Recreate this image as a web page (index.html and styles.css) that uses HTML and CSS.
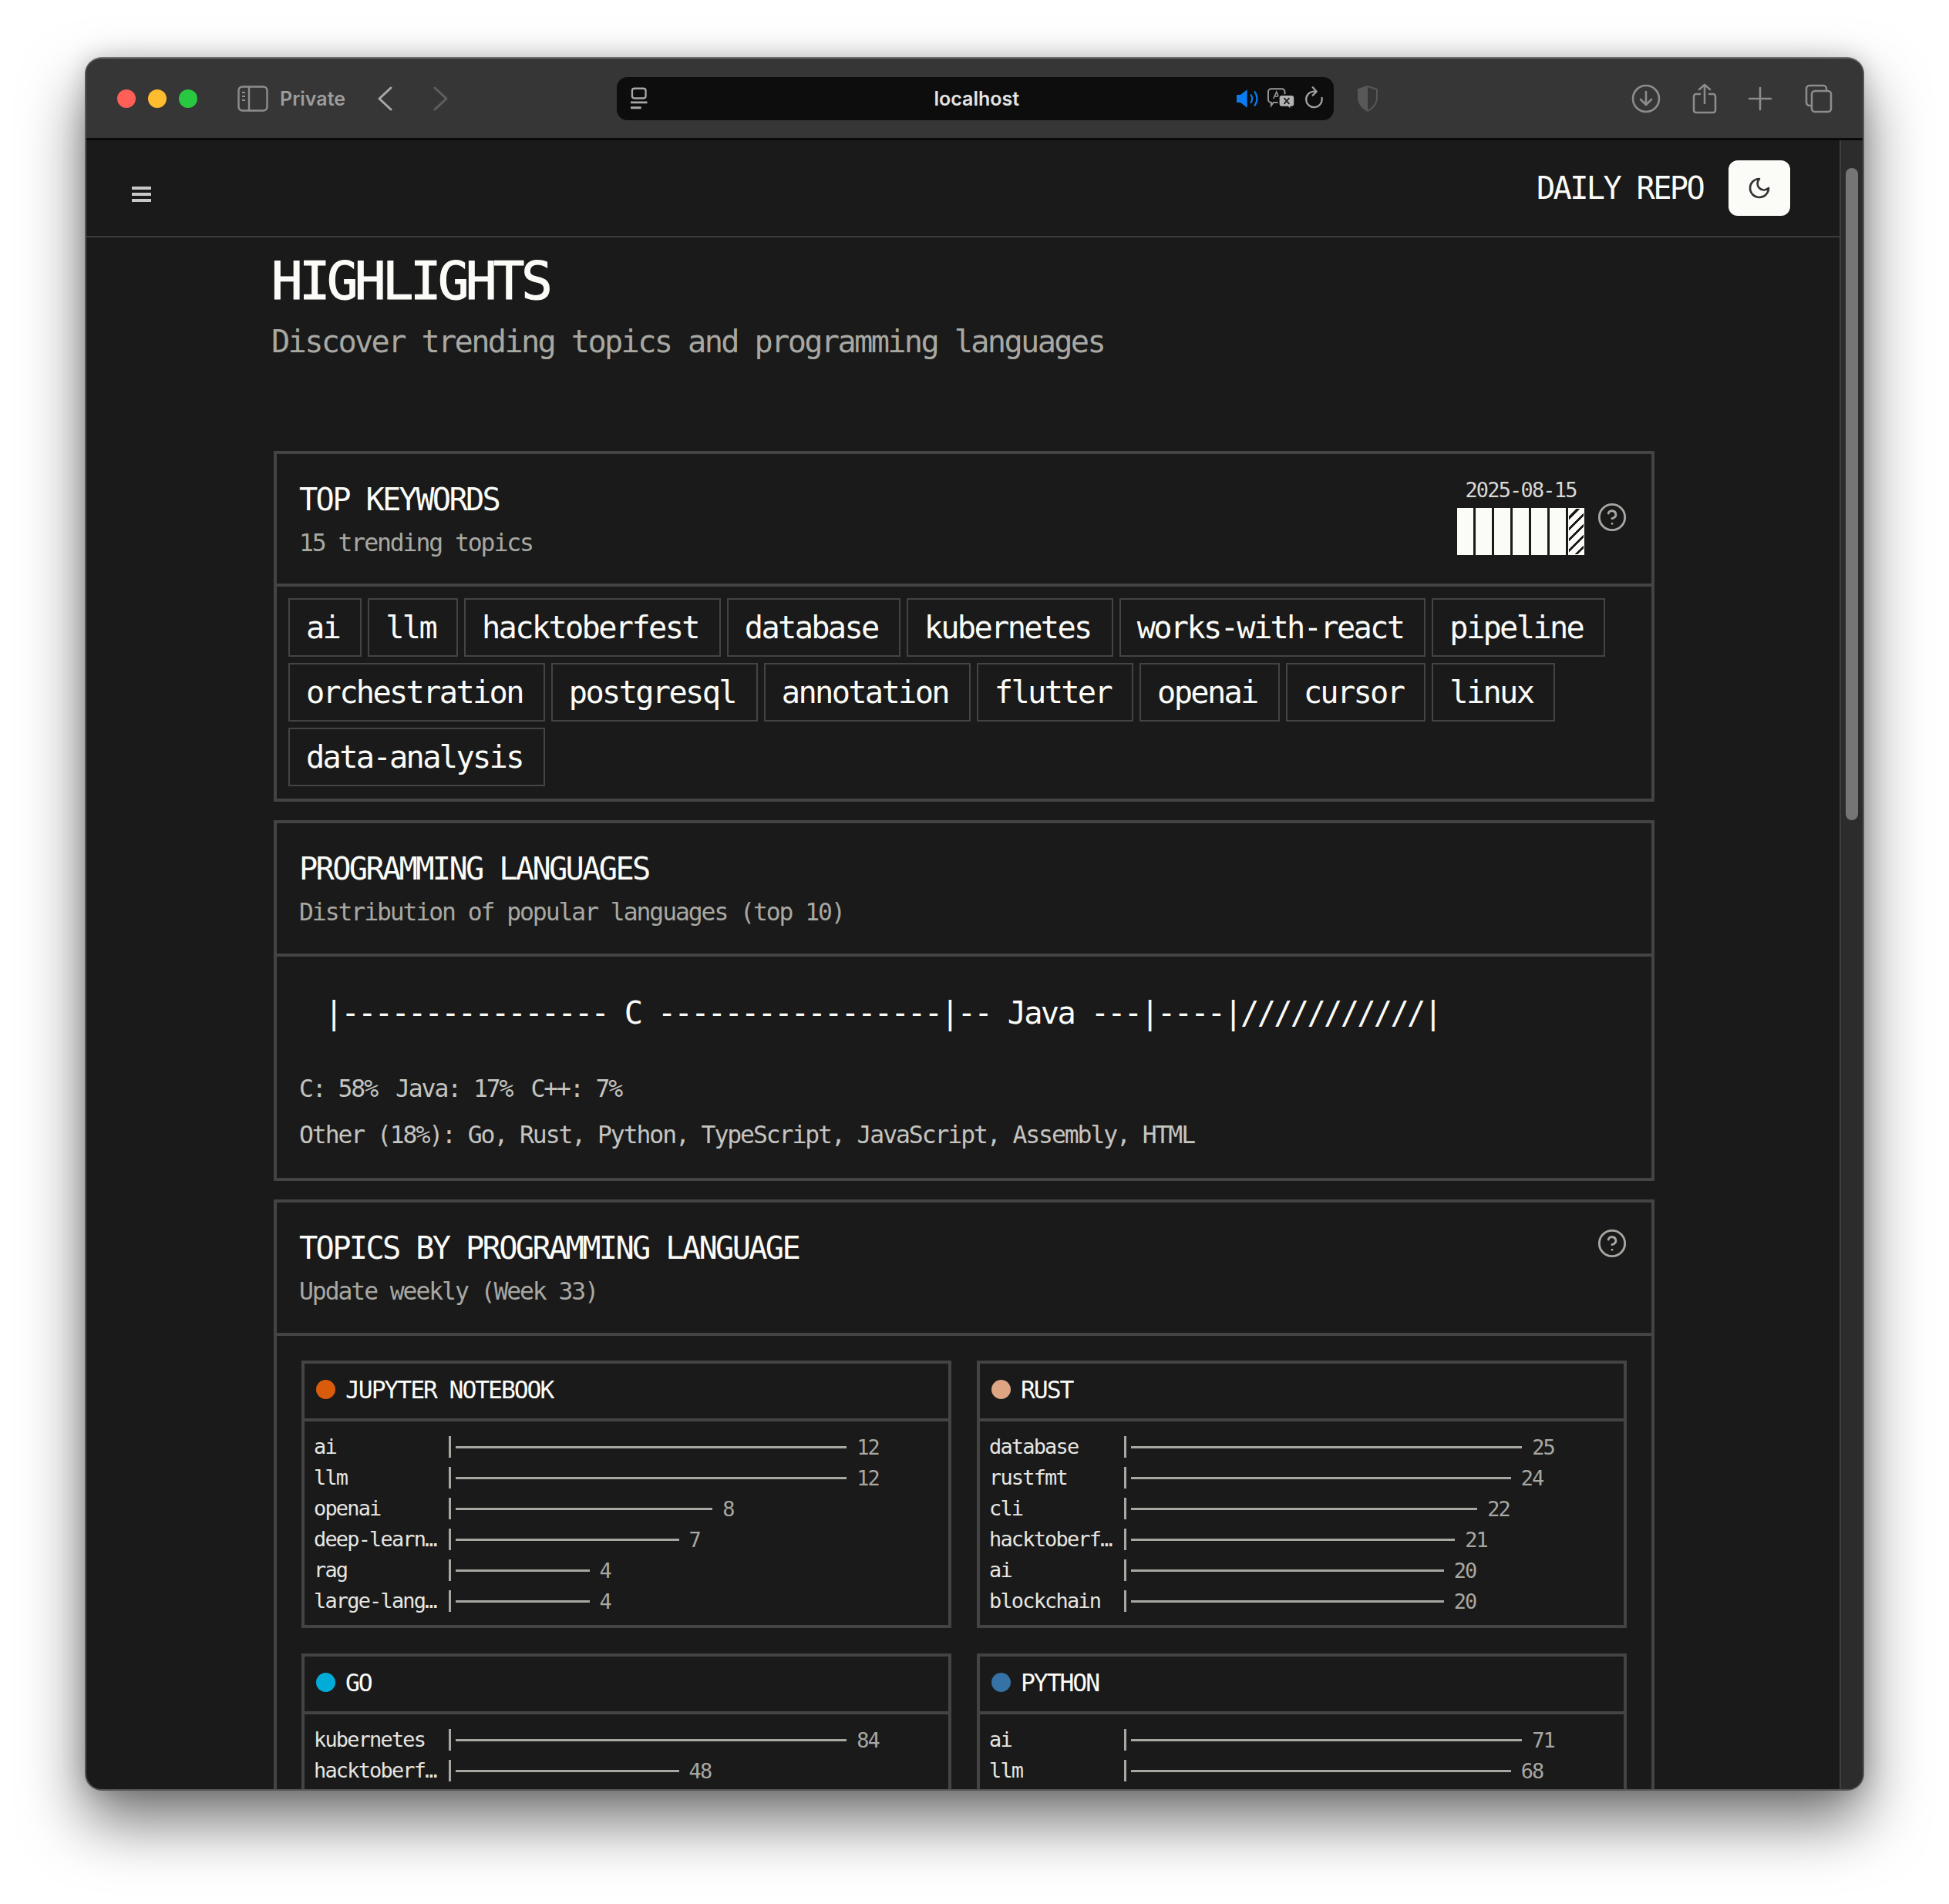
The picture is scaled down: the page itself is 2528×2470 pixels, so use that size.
FILE: index.html
```html
<!DOCTYPE html>
<html lang="en">
<head>
    <meta charset="UTF-8">
    <meta name="viewport" content="width=device-width, initial-scale=1.0">
    <title>Daily Repo - Highlights</title>
    <link rel="stylesheet" href="styles.css">
</head>
<body>
    <div class="window">
        <div class="toolbar">
            <div class="lights">
                <span class="light red"></span>
                <span class="light yellow"></span>
                <span class="light green"></span>
            </div>
            <svg class="tb-sidebar" width="40" height="34" viewBox="0 0 40 34" fill="none" stroke="#8e8e8e" stroke-width="2.4">
                <rect x="1.5" y="1.5" width="37" height="31" rx="5"/>
                <path d="M15 2v30"/>
                <path d="M6 9h4M6 14h4M6 19h4" stroke-width="2"/>
            </svg>
            <span class="tb-private">Private</span>
            <svg class="tb-back" width="22" height="32" viewBox="0 0 22 32" fill="none" stroke="#a8a8a8" stroke-width="3" stroke-linecap="round" stroke-linejoin="round">
                <path d="M19 2 4 16l15 14"/>
            </svg>
            <svg class="tb-forward" width="22" height="32" viewBox="0 0 22 32" fill="none" stroke="#5e5e5e" stroke-width="3" stroke-linecap="round" stroke-linejoin="round">
                <path d="M3 2l15 14L3 30"/>
            </svg>
            <div class="urlbar">
                <svg class="url-page" width="22" height="30" viewBox="0 0 22 30" fill="none" stroke="#a6a6a6" stroke-width="2.4">
                    <rect x="2" y="1.5" width="18" height="13" rx="3"/>
                    <path d="M0 20h22M0 27h14" stroke-width="3"/>
                </svg>
                <span class="url-text">localhost</span>
                <svg class="url-sound" width="30" height="26" viewBox="0 0 30 26">
                    <path d="M1 8h5l9-7v24l-9-7H1z" fill="#0a7cf0"/>
                    <path d="M20 8c2 3 2 7 0 10M25 4c4 5 4 13 0 18" fill="none" stroke="#0a7cf0" stroke-width="2.2" stroke-linecap="round"/>
                </svg>
                <svg class="url-translate" width="38" height="30" viewBox="0 0 38 30" fill="none" stroke="#9a9a9a" stroke-width="2">
                    <path d="M6 2h14a4 4 0 0 1 4 4v10a4 4 0 0 1-4 4H9l-3 4v-4a4 4 0 0 1-4-4V6a4 4 0 0 1 4-4z"/>
                    <path d="M9 15 13 6l4 9M10.500 12h5" stroke-width="1.600"/>
                    <path d="M20 10h13a4 4 0 0 1 4 4v8a4 4 0 0 1-4 4h-1v4l-4-4h-8a4 4 0 0 1-4-4v-8a4 4 0 0 1 4-4z" fill="#b4b4b4" stroke="#0d0d0d"/>
                    <path d="M23 14l7 8M30 14l-7 8" stroke="#222" stroke-width="2"/>
                </svg>
                <svg class="url-reload" width="26" height="32" viewBox="0 0 26 32" fill="none" stroke="#a0a0a0" stroke-width="2.400" stroke-linecap="round" stroke-linejoin="round">
                    <path d="M22 15a10.500 10.500 0 1 1-9-8.500"/>
                    <path d="M10 1l5 5.500-5 5"/>
                </svg>
            </div>
            <svg class="tb-shield" width="28" height="34" viewBox="0 0 28 34">
                <path d="M14 1 2 5v11c0 8 5 13 12 17 7-4 12-9 12-17V5z" fill="none" stroke="#585858" stroke-width="2"/>
                <path d="M14 1 2 5v11c0 8 5 13 12 17z" fill="#585858"/>
            </svg>
            <div class="tb-right">
                <svg class="tb-download" width="38" height="38" viewBox="0 0 38 38" fill="none" stroke="#8c8c8c" stroke-width="2.600" stroke-linecap="round" stroke-linejoin="round">
                    <circle cx="19" cy="19" r="17"/>
                    <path d="M19 10v17M12 20l7 7 7-7"/>
                </svg>
                <svg class="tb-share" width="32" height="40" viewBox="0 0 32 40" fill="none" stroke="#8c8c8c" stroke-width="2.600" stroke-linecap="round" stroke-linejoin="round">
                    <path d="M10 14H5a3 3 0 0 0-3 3v18a3 3 0 0 0 3 3h22a3 3 0 0 0 3-3V17a3 3 0 0 0-3-3h-5"/>
                    <path d="M16 26V2M9 8l7-6 7 6"/>
                </svg>
                <svg width="32" height="32" viewBox="0 0 32 32" fill="none" stroke="#8c8c8c" stroke-width="2.600" stroke-linecap="round">
                    <path d="M16 2v28M2 16h28"/>
                </svg>
                <svg width="36" height="38" viewBox="0 0 36 38" fill="none" stroke="#8c8c8c" stroke-width="2.600">
                    <path d="M8 28H6a4 4 0 0 1-4-4V6a4 4 0 0 1 4-4h18a4 4 0 0 1 4 4v3"/>
                    <rect x="9" y="9" width="25" height="27" rx="4"/>
                </svg>
            </div>
        </div>

        <div class="viewport">
            <div class="page">
                <nav class="nav">
                    <div class="hamburger"><span></span><span></span><span></span></div>
                    <div class="nav-right">
                        <span class="brand">DAILY REPO</span>
                        <button class="theme-btn">
                            <svg width="32" height="32" viewBox="0 0 24 24" fill="none" stroke="#333" stroke-width="2" stroke-linecap="round" stroke-linejoin="round">
                                <path d="M12 3a6 6 0 0 0 9 9 9 9 0 1 1-9-9Z"/>
                            </svg>
                        </button>
                    </div>
                </nav>

                <main class="content">
                    <h1>HIGHLIGHTS</h1>
                    <p class="lead">Discover trending topics and programming languages</p>

                    <section class="card first">
                        <div class="card-head">
                            <div>
                                <h2>TOP KEYWORDS</h2>
                                <p class="sub">15 trending topics</p>
                            </div>
                            <div class="head-right">
                                <div class="date-box">
                                    <span class="date">2025-08-15</span>
                                    <div class="days">
                                        <span></span><span></span><span></span><span></span><span></span><span></span><span class="today"></span>
                                    </div>
                                </div>
                                <svg class="help" width="40" height="40" viewBox="0 0 24 24" fill="none" stroke="#a8a8a3" stroke-width="1.700" stroke-linecap="round" stroke-linejoin="round">
                                    <circle cx="12" cy="12" r="10"/>
                                    <path d="M9.090 9a3 3 0 0 1 5.830 1c0 2-3 3-3 3"/>
                                    <path d="M12 17h.01"/>
                                </svg>
                            </div>
                        </div>
                        <div class="tags">
                            <span class="tag">ai</span>
                            <span class="tag">llm</span>
                            <span class="tag">hacktoberfest</span>
                            <span class="tag">database</span>
                            <span class="tag">kubernetes</span>
                            <span class="tag">works-with-react</span>
                            <span class="tag">pipeline</span>
                            <span class="tag">orchestration</span>
                            <span class="tag">postgresql</span>
                            <span class="tag">annotation</span>
                            <span class="tag">flutter</span>
                            <span class="tag">openai</span>
                            <span class="tag">cursor</span>
                            <span class="tag">linux</span>
                            <span class="tag">data-analysis</span>
                        </div>
                    </section>

                    <section class="card">
                        <div class="card-head">
                            <div>
                                <h2>PROGRAMMING LANGUAGES</h2>
                                <p class="sub">Distribution of popular languages (top 10)</p>
                            </div>
                        </div>
                        <div class="lang-body">
                            <pre class="lang-chart">|---------------- C -----------------|-- Java ---|----|///////////|</pre>
                            <div class="lang-stats">
                                <span>C: 58%</span>
                                <span>Java: 17%</span>
                                <span>C++: 7%</span>
                            </div>
                            <p class="lang-other">Other (18%): Go, Rust, Python, TypeScript, JavaScript, Assembly, HTML</p>
                        </div>
                    </section>

                    <section class="card">
                        <div class="card-head">
                            <div>
                                <h2>TOPICS BY PROGRAMMING LANGUAGE</h2>
                                <p class="sub">Update weekly (Week 33)</p>
                            </div>
                            <svg class="help help-top" width="40" height="40" viewBox="0 0 24 24" fill="none" stroke="#a8a8a3" stroke-width="1.700" stroke-linecap="round" stroke-linejoin="round">
                                <circle cx="12" cy="12" r="10"/>
                                <path d="M9.090 9a3 3 0 0 1 5.830 1c0 2-3 3-3 3"/>
                                <path d="M12 17h.01"/>
                            </svg>
                        </div>
                        <div class="lang-grid">
                            <div class="lang-card">
                                <div class="lang-head"><span class="dot jupyter"></span>JUPYTER NOTEBOOK</div>
                                <div class="rows">
                                    <div class="row"><span class="label">ai</span><span class="tick"></span><span class="line" style="width:35ch"></span><span class="val">12</span></div>
                                    <div class="row"><span class="label">llm</span><span class="tick"></span><span class="line" style="width:35ch"></span><span class="val">12</span></div>
                                    <div class="row"><span class="label">openai</span><span class="tick"></span><span class="line" style="width:23ch"></span><span class="val">8</span></div>
                                    <div class="row"><span class="label">deep-learn…</span><span class="tick"></span><span class="line" style="width:20ch"></span><span class="val">7</span></div>
                                    <div class="row"><span class="label">rag</span><span class="tick"></span><span class="line" style="width:12ch"></span><span class="val">4</span></div>
                                    <div class="row"><span class="label">large-lang…</span><span class="tick"></span><span class="line" style="width:12ch"></span><span class="val">4</span></div>
                                </div>
                            </div>
                            <div class="lang-card">
                                <div class="lang-head"><span class="dot rust"></span>RUST</div>
                                <div class="rows">
                                    <div class="row"><span class="label">database</span><span class="tick"></span><span class="line" style="width:35ch"></span><span class="val">25</span></div>
                                    <div class="row"><span class="label">rustfmt</span><span class="tick"></span><span class="line" style="width:34ch"></span><span class="val">24</span></div>
                                    <div class="row"><span class="label">cli</span><span class="tick"></span><span class="line" style="width:31ch"></span><span class="val">22</span></div>
                                    <div class="row"><span class="label">hacktoberf…</span><span class="tick"></span><span class="line" style="width:29ch"></span><span class="val">21</span></div>
                                    <div class="row"><span class="label">ai</span><span class="tick"></span><span class="line" style="width:28ch"></span><span class="val">20</span></div>
                                    <div class="row"><span class="label">blockchain</span><span class="tick"></span><span class="line" style="width:28ch"></span><span class="val">20</span></div>
                                </div>
                            </div>
                            <div class="lang-card">
                                <div class="lang-head"><span class="dot go"></span>GO</div>
                                <div class="rows">
                                    <div class="row"><span class="label">kubernetes</span><span class="tick"></span><span class="line" style="width:35ch"></span><span class="val">84</span></div>
                                    <div class="row"><span class="label">hacktoberf…</span><span class="tick"></span><span class="line" style="width:20ch"></span><span class="val">48</span></div>
                                </div>
                            </div>
                            <div class="lang-card">
                                <div class="lang-head"><span class="dot python"></span>PYTHON</div>
                                <div class="rows">
                                    <div class="row"><span class="label">ai</span><span class="tick"></span><span class="line" style="width:35ch"></span><span class="val">71</span></div>
                                    <div class="row"><span class="label">llm</span><span class="tick"></span><span class="line" style="width:34ch"></span><span class="val">68</span></div>
                                </div>
                            </div>
                        </div>
                    </section>
                </main>
            </div>
            <div class="scrollbar"><div class="thumb"></div></div>
        </div>
    </div>
</body>
</html>
```

FILE: styles.css
```css
* {
    box-sizing: border-box;
    letter-spacing: -0.066em;
}
html, body {
    margin: 0;
    height: 2470px;
    overflow: hidden;
    background: #ffffff;
}
body {
    padding: 74px 110px 0;
    font-family: "DejaVu Sans Mono", "Liberation Mono", monospace;
    color: #fbfcf8;
}

/* browser window */
.window {
    width: 2308px;
    height: 2249px;
    display: flex;
    flex-direction: column;
    overflow: hidden;
    background: #1a1a1a;
    border: 2px solid #555;
    border-top-color: #6e6e6e;
    border-radius: 22px;
    box-shadow: 0 40px 80px rgba(0, 0, 0, 0.55), 0 0 30px rgba(0, 0, 0, 0.18);
}
.toolbar {
    height: 106px;
    flex: none;
    display: flex;
    align-items: center;
    padding: 0 39px 0 40px;
    background: #363636;
    border-bottom: 3px solid #0a0a0a;
    font-family: Inter, "Liberation Sans", sans-serif;
}
.lights {
    display: flex;
    gap: 16px;
}
.light {
    width: 24px;
    height: 24px;
    border-radius: 50%;
}
.red { background: #ff5f57; }
.yellow { background: #febc2e; }
.green { background: #28c840; }
.tb-sidebar {
    margin-left: 52px;
}
.tb-private {
    margin-left: 15px;
    font-size: 25px;
    font-weight: 600;
    color: #9c9c9c;
    letter-spacing: 0;
}
.tb-back {
    margin-left: 40px;
}
.tb-forward {
    margin-left: 51px;
}
.urlbar {
    width: 930px;
    height: 56px;
    margin-left: 217px;
    display: flex;
    align-items: center;
    padding: 0 12px 0 18px;
    background: #0d0d0d;
    border-radius: 14px;
}
.url-text {
    margin-left: 372px;
    font-size: 25px;
    font-weight: 600;
    color: #e4e4e4;
    letter-spacing: 0;
}
.url-sound {
    margin-left: 281px;
}
.url-translate {
    margin-left: 11px;
}
.url-reload {
    margin-left: 12px;
}
.tb-shield {
    margin-left: 30px;
}
.tb-right {
    margin-left: auto;
    display: flex;
    align-items: center;
    gap: 42px;
}
.tb-download {
    margin-right: -1px;
}
.tb-share {
    margin-right: -2px;
}

.viewport {
    flex: 1;
    min-height: 0;
    display: flex;
}
.page {
    width: 2274px;
    flex: none;
}
.scrollbar {
    width: 30px;
    flex: none;
    padding: 36px 0 0 6px;
    background: #2c2c2c;
    border-left: 2px solid #3e3e3e;
}
.thumb {
    width: 16px;
    height: 846px;
    background: #757575;
    border-radius: 8px;
}

/* nav */
.nav {
    height: 126px;
    display: flex;
    align-items: center;
    justify-content: space-between;
    padding: 0 64px 0 59px;
    border-bottom: 2px solid #3c3c3c;
}
.hamburger {
    width: 25px;
    margin-top: 16px;
    display: flex;
    flex-direction: column;
    gap: 4px;
}
.hamburger span {
    height: 4px;
    background: #c8c8c8;
}
.nav-right {
    display: flex;
    align-items: center;
    gap: 33px;
}
.brand {
    font-size: 40.300px;
}
.theme-btn {
    width: 80px;
    height: 72px;
    display: flex;
    align-items: center;
    justify-content: center;
    background: #fbfcf8;
    border: none;
    border-radius: 12px;
}

/* content */
.content {
    padding: 0 240px 0 243px;
}
h1 {
    margin: 17px 0 0 -3px;
    font-size: 67.200px;
    font-weight: 400;
    line-height: 80px;
    -webkit-text-stroke: 1.200px #fbfcf8;
}
.lead {
    margin: 15px 0 0 -3px;
    font-size: 40.300px;
    line-height: 48px;
    color: #a8a8a3;
}
.card {
    margin-top: 24px;
    border: 4px solid #444;
}
.card.first {
    margin-top: 117px;
}
.card-head {
    display: flex;
    justify-content: space-between;
    align-items: center;
    padding: 36px 31px 34px 29px;
    border-bottom: 4px solid #444;
}
.card.first .card-head {
    padding-bottom: 33px;
}
h2 {
    margin: 0;
    font-size: 40.300px;
    font-weight: 400;
    line-height: 48px;
}
.sub {
    margin: 11px 0 0;
    font-size: 31.400px;
    line-height: 40px;
    color: #a8a8a3;
}
.head-right {
    align-self: flex-start;
    display: flex;
    align-items: center;
    gap: 16px;
    margin-top: -3px;
}
.date-box {
    display: flex;
    flex-direction: column;
    align-items: center;
    gap: 9px;
}
.date {
    font-size: 26.900px;
    line-height: 28px;
    color: #d8d8d4;
}
.days {
    display: flex;
    gap: 3px;
}
.days span {
    width: 21px;
    height: 61px;
    background: #fbfcf8;
}
.days .today {
    background: repeating-linear-gradient(135deg, #fbfcf8 0 7px, #1a1a1a 7px 10px);
    border: 1px solid #fbfcf8;
}
.help {
    flex: none;
}
.help-top {
    align-self: flex-start;
    margin-top: -3px;
}

/* keyword tags */
.tags {
    display: flex;
    flex-wrap: wrap;
    gap: 8px;
    padding: 15px 15px 16px;
}
.tag {
    height: 76px;
    padding: 0 27px 0 21px;
    border: 2px solid #444;
    font-size: 40.300px;
    line-height: 74px;
}

/* language distribution */
.lang-body {
    padding: 50px 29px 36px;
}
.lang-chart {
    margin: 0 0 0 33px;
    font-family: inherit;
    font-size: 40.300px;
    line-height: 48px;
}
.lang-stats {
    margin-top: 53px;
    display: flex;
    gap: 24px;
    font-size: 31.400px;
    line-height: 40px;
    color: #c4c4c0;
}
.lang-other {
    margin: 20px 0 0;
    font-size: 31.400px;
    line-height: 40px;
    color: #c4c4c0;
}

/* topics per language */
.lang-grid {
    display: grid;
    grid-template-columns: 1fr 1fr;
    gap: 33px 33px;
    padding: 32px;
}
.lang-card {
    border: 4px solid #444;
}
.lang-head {
    height: 75px;
    display: flex;
    align-items: center;
    gap: 13px;
    padding: 0 0 4px 15px;
    border-bottom: 4px solid #444;
    font-size: 31.400px;
}
.dot {
    width: 25px;
    height: 25px;
    border-radius: 50%;
}
.jupyter { background: #da5b0b; }
.rust { background: #dea584; }
.go { background: #00add8; }
.python { background: #3572a5; }
.rows {
    padding: 13px 14px 11px 12px;
    font-size: 26.900px;
}
.row {
    height: 40px;
    display: flex;
    align-items: center;
}
.label {
    width: 174.500px;
    flex: none;
    color: #e6e6e2;
    line-height: 40px;
}
.tick {
    width: 3px;
    height: 28px;
    margin-right: 6px;
    background: #a8a8a3;
}
.line {
    height: 3px;
    font-size: 24.100px;
    background: #a8a8a3;
}
.val {
    margin-left: 13px;
    color: #a8a8a3;
}
```
